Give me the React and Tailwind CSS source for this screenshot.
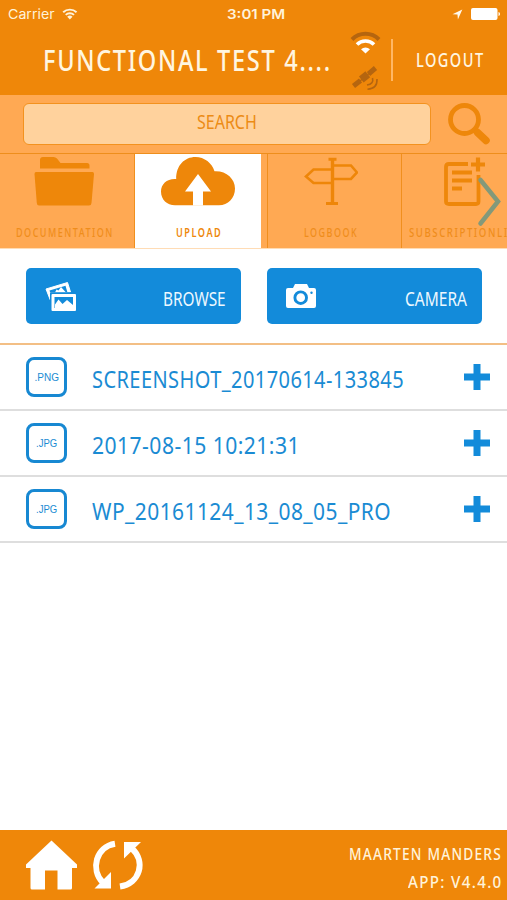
import { useLayoutEffect, useRef, useState } from 'react';
import clsx from 'clsx';

// Condenses or widens one line of text so that it fills its box.
function Fit({ children, className }) {
  const box = useRef(null);
  const text = useRef(null);
  const [scale, setScale] = useState(1);
  useLayoutEffect(() => {
    const gap = parseFloat(getComputedStyle(text.current).letterSpacing) || 0;
    setScale(box.current.offsetWidth / (text.current.offsetWidth - gap));
  }, [children]);
  return (
    <div ref={box} className={clsx('shrink-0 whitespace-nowrap', className)}>
      <span ref={text} className="inline-block origin-left" style={{ transform: `scaleX(${scale})` }}>
        {children}
      </span>
    </div>
  );
}

function StatusBar() {
  return (
    <div className="flex h-7 items-center pl-2 pr-[7px] font-['Inter',sans-serif] text-[13px] text-[#fff3da]">
      <Fit className="w-[47px] leading-7">Carrier</Fit>
      <svg className="ml-[7px] h-3 w-4" viewBox="0 0 16 12" fill="none" stroke="#fff3da" strokeWidth="2">
        <path d="M1.2 4.3a9.8 9.8 0 0 1 13.6 0M3.8 6.9a6 6 0 0 1 8.4 0" />
        <path d="M8 11.5 5.3 8.8a4 4 0 0 1 5.4 0z" fill="#fff3da" stroke="none" />
      </svg>
      <Fit className="ml-[149px] w-[58px] font-semibold leading-7">3:01 PM</Fit>
      <svg className="ml-[167px] h-[11px] w-[11px]" viewBox="0 0 11 11" fill="#fff8ea">
        <path d="M10.5.5 6 10.5 5.6 5.6.5 5.2z" />
      </svg>
      <svg className="ml-[8px] h-3 w-[30px]" viewBox="0 0 30 12" fill="#fff">
        <rect width="27" height="12" rx="2" />
        <path d="M28 4c2 .5 2 3.500 0 4z" />
      </svg>
    </div>
  );
}

function Header() {
  return (
    <header className="h-[95px] bg-[#ef8709]">
      <StatusBar />
      <div className="flex h-[66px] items-start pl-[43px] font-medium text-[#fff6e0]">
        <Fit className="mt-[12px] w-[287px] text-[28px] leading-10 tracking-[2px]">FUNCTIONAL TEST 4....</Fit>
        <svg className="ml-[20px] mt-[3px] h-[60px] w-[31px]" viewBox="350 31 31 60" fill="none">
          <path d="M352 39.500a19 19 0 0 1 27 0" stroke="#b5650f" strokeWidth="4" />
          <path d="M357 44.500a12 12 0 0 1 17 0" stroke="#fff" strokeWidth="3.600" />
          <path d="M365.500 53.500l-4.500-4.300a7 7 0 0 1 9 0z" fill="#fff" />
          <g stroke="#b5650f">
            <path d="M353.500 86L360.500 80.500M368.500 74L375.500 68" strokeWidth="5" />
            <path d="M360 81L369 73.500" strokeWidth="1.500" />
            <path d="M361.300 79.500L367.800 74.300" strokeWidth="7.500" />
            <path d="M372.500 78q1.500 6-5.500 7M377 79q.5 9.500-9.500 10.300" strokeWidth="1.600" />
          </g>
        </svg>
        <div className="ml-[10px] mt-[11px] h-[42px] w-[2px] bg-[#ffb765]" />
        <Fit className="ml-[23px] mt-[12px] w-[67px] text-[20px] leading-10 tracking-[2px]">LOGOUT</Fit>
      </div>
    </header>
  );
}

function SearchBar() {
  return (
    <div className="flex h-[59px] items-start border-b border-[#ee8e1c] bg-[#ffa953] pl-[23px] pt-[8px]">
      <div className="flex h-[42px] w-[408px] justify-center rounded-[6px] border border-[#f3921f] bg-[#ffd29d]">
        <Fit className="-mt-[2px] w-[60px] text-[20px] leading-10 text-[#ec8b15]">SEARCH</Fit>
      </div>
      <svg className="ml-[16px] h-[44px] w-[44px]" viewBox="447 103 44 44" fill="none" stroke="#ee870a">
        <circle cx="464.500" cy="119.500" r="14" strokeWidth="4.800" />
        <path d="M474.500 129.500l4 4" strokeWidth="5" />
        <path d="M477.500 132.500l8.500 8" strokeWidth="7.500" strokeLinecap="round" />
      </svg>
    </div>
  );
}

function Tab({ icon, label, labelClass, className }) {
  return (
    <div className={clsx('flex h-[94px] shrink-0 flex-col items-center overflow-hidden text-[12px]', className)}>
      <div className="flex h-[52px] w-full items-start justify-center">{icon}</div>
      <Fit className={clsx('mt-[17px] leading-5 tracking-[2px]', labelClass)}>{label}</Fit>
    </div>
  );
}

function FolderIcon() {
  return (
    <svg className="mt-[3px] h-[49px] w-[60px]" viewBox="34 157 60 49" fill="#ee870a">
      <path d="M40 168.500V160q0-3 3-3h10.500q2 0 3.500 1.500l3.500 4.500H87q2.500 0 2.500 2.500v3z" />
      <path d="M36 172h56.500q1.500 0 1.500 2l-2.500 29q-.3 2.500-2.500 2.500H39q-2 0-2.200-2.500L34.500 174q0-2 1.500-2z" />
    </svg>
  );
}

function CloudIcon() {
  return (
    <svg className="mt-[3px] h-[49px] w-[75px]" viewBox="161 157 75 49">
      <path
        d="M175 205.300h44c9 0 16-7.300 16-16.800 0-10-9-18-20.500-17.300-2.500-8-10-14.200-19-14.200-11 0-19.500 8.500-19.300 22-9-.7-15.200 5-15.200 12.500 0 8 6 13.800 14 13.800z"
        fill="#ee870a"
      />
      <path d="M198 174l13 17.500h-8v14h-10v-14h-8z" fill="#fff" />
    </svg>
  );
}

function SignpostIcon() {
  return (
    <svg className="mt-[3px] h-[49px] w-[54px]" viewBox="304 157 54 49" fill="none" stroke="#ee8609" strokeWidth="2.600">
      <path d="M328.500 159.300h8M326 203.500h12" strokeWidth="3" />
      <path d="M332.500 159v45" strokeWidth="3.400" />
      <path d="M332.500 169.500h-19l-7.500 7 7.500 6.500h19M332.500 165.500h18.500l6 7-6 6.500h-18.500" />
    </svg>
  );
}

function DocumentIcon() {
  return (
    <svg className="mt-[3px] ml-[13px] h-[49px] w-[43px]" viewBox="443 157 43 49" fill="none" stroke="#ee870a" strokeWidth="3.800">
      <path d="M468 164h-19q-3 0-3 3v34.500q0 2.500 3 2.500h27q2.500 0 2.500-2.500V175" />
      <path d="M452 172.500h20M452 180.500h20M452 188.500h10" strokeWidth="3.800" />
      <path d="M478 157.500v14M471 164.500h14" strokeWidth="4.200" />
    </svg>
  );
}

function Tabs() {
  return (
    <nav className="relative flex h-[95px] overflow-hidden border-b border-[#ffdcb5] bg-[#ffa953] font-medium text-[#ef8d1b]">
      <Tab className="w-[135px] border-r border-[#f08f1e] pr-[6px]" icon={<FolderIcon />} label="DOCUMENTATION" labelClass="w-[96px]" />
      <Tab
        className="w-[126px] bg-white font-semibold text-[#ee870a]"
        icon={<CloudIcon />}
        label="UPLOAD"
        labelClass="w-[45px]"
      />
      <div className="h-[94px] w-[7px] border-r border-[#f08f1e]" />
      <Tab className="w-[134px] border-r border-[#f08f1e] pr-[8px]" icon={<SignpostIcon />} label="LOGBOOK" labelClass="w-[53px]" />
      <Tab className="w-[105px] pl-[7px]" icon={<DocumentIcon />} label="SUBSCRIPTIONLI" labelClass="w-[98px]" />
      <svg className="absolute right-[5px] top-[22px] h-[52px] w-[26px]" viewBox="476 176 26 52" fill="none">
        <path d="M480.500 180L498 201.500 480.500 223.500" stroke="#83997a" strokeWidth="4.500" strokeLinecap="round" />
      </svg>
    </nav>
  );
}

function ActionButton({ icon, label, labelClass }) {
  return (
    <button className="flex h-[56px] w-[215px] items-start justify-between rounded-[5px] bg-[#138bda] pl-[19px] pr-[15px] text-[#edf8ff]">
      {icon}
      <Fit className={clsx('mt-[11px] text-left text-[20px] leading-10', labelClass)}>{label}</Fit>
    </button>
  );
}

function PhotosIcon() {
  return (
    <svg className="mt-[13px] h-[31px] w-[32px]" viewBox="45 281 32 31">
      <path d="M46 289L67.500 282.500l3 9.500H50.500v8.500z" fill="#fff" stroke="#fff" strokeLinejoin="round" />
      <path d="M49.500 290.500l16-4.700 1.800 6.200H50z" fill="#138bda" />
      <path d="M55 292.500l1.500-3 2 1 2.500-3.500 5 5.500z" fill="#fff" />
      <rect x="50" y="292.300" width="27" height="20" fill="#138bda" />
      <rect x="51.500" y="294" width="24.500" height="17" rx="1" fill="#fff" />
      <rect x="54.500" y="297" width="18.500" height="11" fill="#138bda" />
      <path d="M55 308v-3.500l3.500-5 4 4.500 4.500-4 6 5v3z" fill="#fff" />
    </svg>
  );
}

function CameraIcon() {
  return (
    <svg className="mt-[16px] h-[25px] w-[30px]" viewBox="286 284 30 25">
      <path d="M288 288h5l2-4h12l2 4h5q2 0 2 2v16q0 2-2 2h-26q-2 0-2-2v-16q0-2 2-2z" fill="#fff" />
      <circle cx="300.700" cy="297.700" r="5.800" fill="none" stroke="#138bda" strokeWidth="2.900" />
      <circle cx="311.500" cy="292.800" r="1.200" fill="#138bda" />
    </svg>
  );
}

function FileRow({ type, typeClass, name, nameClass }) {
  return (
    <li className="flex h-[66px] items-start border-b-2 border-[#dedede] pl-[26px] text-[#1a8bd3]">
      <div className="mt-[12px] flex h-[40px] w-[41px] justify-center rounded-[8px] border-[3px] border-[#1788d2]">
        <Fit className={clsx("mt-[9px] font-['Liberation_Sans',sans-serif] text-[10px] leading-[18px]", typeClass)}>{type}</Fit>
      </div>
      <Fit className={clsx('ml-[25px] mt-[14px] text-[23.500px] leading-10 tracking-[.5px]', nameClass)}>{name}</Fit>
      <svg className="ml-auto mr-[17px] mt-[19px] h-[26px] w-[26px]" viewBox="0 0 26 26" fill="#138bda">
        <path d="M9.500 0h7v9.500H26v7h-9.500V26h-7v-9.500H0v-7h9.500z" />
      </svg>
    </li>
  );
}

function Footer() {
  return (
    <footer className="flex h-[70px] items-start bg-[#ef8709] pl-[26px] pr-[6px] text-[17px] font-medium tracking-[1.500px] text-[#fff3da]">
      <svg className="mt-[10px] h-[50px] w-[51px]" viewBox="26 840 51 50" fill="#fff">
        <path d="M51.500 840.500L77 864.500v3.500h-5v20q0 1.500-1.500 1.500H57.500V870.500H45v19H32q-1.500 0-1.500-1.500v-20H26v-3.500z" />
      </svg>
      <svg className="ml-[15px] mt-[10px] h-[50px] w-[52px]" viewBox="92 840 52 50">
        <g fill="none" stroke="#fff" strokeWidth="6">
          <path d="M115 843.700c-19 3-25 26-12 39" />
          <path d="M120 886.500c20-3 26-25 12-38" />
        </g>
        <path d="M111 872v16.500H94.500zM124 842h17l-17 16.500z" fill="#fff" />
      </svg>
      <div className="ml-auto flex flex-col items-end pt-[10px]">
        <Fit className="w-[152px] leading-7">MAARTEN MANDERS</Fit>
        <Fit className="w-[93px] leading-7">APP: V4.4.0</Fit>
      </div>
    </footer>
  );
}

export default function App() {
  return (
    <div className="flex h-[900px] w-[507px] flex-col overflow-hidden bg-white font-['Noto_Sans',sans-serif]">
      <Header />
      <SearchBar />
      <Tabs />
      <div className="flex h-[96px] gap-[26px] border-b-2 border-[#f3bf85] pl-[26px] pt-[19px]">
        <ActionButton icon={<PhotosIcon />} label="BROWSE" labelClass="w-[63px]" />
        <ActionButton icon={<CameraIcon />} label="CAMERA" labelClass="w-[62px]" />
      </div>
      <ul>
        <FileRow type=".PNG" typeClass="w-[24px]" name="SCREENSHOT_20170614-133845" nameClass="w-[312px]" />
        <FileRow type=".JPG" typeClass="w-[21px]" name="2017-08-15 10:21:31" nameClass="w-[208px]" />
        <FileRow type=".JPG" typeClass="w-[21px]" name="WP_20161124_13_08_05_PRO" nameClass="w-[299px]" />
      </ul>
      <div className="flex-1" />
      <Footer />
    </div>
  );
}
